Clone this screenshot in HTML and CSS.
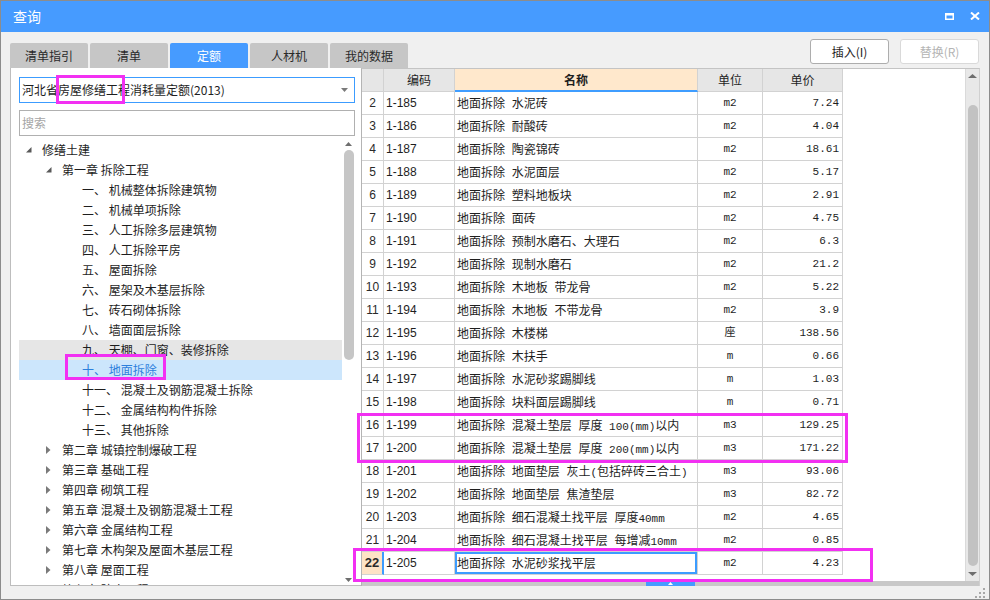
FILE: index.html
```html
<!DOCTYPE html>
<html lang="zh-CN">
<head>
<meta charset="utf-8">
<title>查询</title>
<link rel="stylesheet" href="styles.css">
</head>
<body>
<div class="window">
  <div class="titlebar">
    <span class="title">查询</span>
    <span class="tb-icons">
      <svg class="ico-max" width="9" height="7" viewBox="0 0 9 7"><rect x="0.75" y="0.75" width="7.5" height="5.5" fill="none" stroke="#fff" stroke-width="1.5"/><rect x="0" y="0" width="9" height="2.5" fill="#fff"/></svg>
      <svg class="ico-close" width="10" height="8" viewBox="0 0 10 8"><path d="M1 0.5L9 7.5M9 0.5L1 7.5" stroke="#fff" stroke-width="2"/></svg>
    </span>
  </div>

  <div class="toolbar">
    <div class="tabs">
      <div class="tab">清单指引</div>
      <div class="tab">清单</div>
      <div class="tab active">定额</div>
      <div class="tab">人材机</div>
      <div class="tab">我的数据</div>
    </div>
    <div class="buttons">
      <div class="btn">插入(I)</div>
      <div class="btn disabled">替换(R)</div>
    </div>
  </div>

  <div class="main">
    <div class="left">
      <div class="combo">
        <span class="combo-text">河北省房屋修缮工程消耗量定额(2013)</span>
        <svg class="combo-arrow" width="7" height="4" viewBox="0 0 7 4"><path d="M0 0H7L3.5 4Z" fill="#7a7a7a"/></svg>
      </div>
      <div class="search">搜索</div>
      <div class="tree-wrap">
        <div class="tree">
          <div class="node l0"><span class="tg"><svg width="6" height="6" viewBox="0 0 6 6"><path d="M5.5 0V5.5H0Z" fill="#595959"/></svg></span>修缮土建</div>
          <div class="node l1"><span class="tg"><svg width="6" height="6" viewBox="0 0 6 6"><path d="M5.5 0V5.5H0Z" fill="#595959"/></svg></span>第一章 拆除工程</div>
          <div class="node l2">一、 机械整体拆除建筑物</div>
          <div class="node l2">二、 机械单项拆除</div>
          <div class="node l2">三、 人工拆除多层建筑物</div>
          <div class="node l2">四、 人工拆除平房</div>
          <div class="node l2">五、 屋面拆除</div>
          <div class="node l2">六、 屋架及木基层拆除</div>
          <div class="node l2">七、 砖石砌体拆除</div>
          <div class="node l2">八、 墙面面层拆除</div>
          <div class="node l2 hover">九、 天棚、门窗、装修拆除</div>
          <div class="node l2 selected">十、 地面拆除</div>
          <div class="node l2">十一、 混凝土及钢筋混凝土拆除</div>
          <div class="node l2">十二、 金属结构构件拆除</div>
          <div class="node l2">十三、 其他拆除</div>
          <div class="node l1"><span class="tg"><svg width="5" height="8" viewBox="0 0 5 8"><path d="M0 0L4.5 4L0 8Z" fill="#7a7a7a"/></svg></span>第二章 城镇控制爆破工程</div>
          <div class="node l1"><span class="tg"><svg width="5" height="8" viewBox="0 0 5 8"><path d="M0 0L4.5 4L0 8Z" fill="#7a7a7a"/></svg></span>第三章 基础工程</div>
          <div class="node l1"><span class="tg"><svg width="5" height="8" viewBox="0 0 5 8"><path d="M0 0L4.5 4L0 8Z" fill="#7a7a7a"/></svg></span>第四章 砌筑工程</div>
          <div class="node l1"><span class="tg"><svg width="5" height="8" viewBox="0 0 5 8"><path d="M0 0L4.5 4L0 8Z" fill="#7a7a7a"/></svg></span>第五章 混凝土及钢筋混凝土工程</div>
          <div class="node l1"><span class="tg"><svg width="5" height="8" viewBox="0 0 5 8"><path d="M0 0L4.5 4L0 8Z" fill="#7a7a7a"/></svg></span>第六章 金属结构工程</div>
          <div class="node l1"><span class="tg"><svg width="5" height="8" viewBox="0 0 5 8"><path d="M0 0L4.5 4L0 8Z" fill="#7a7a7a"/></svg></span>第七章 木构架及屋面木基层工程</div>
          <div class="node l1"><span class="tg"><svg width="5" height="8" viewBox="0 0 5 8"><path d="M0 0L4.5 4L0 8Z" fill="#7a7a7a"/></svg></span>第八章 屋面工程</div>
          <div class="node l1"><span class="tg"><svg width="5" height="8" viewBox="0 0 5 8"><path d="M0 0L4.5 4L0 8Z" fill="#7a7a7a"/></svg></span>第九章 防水工程</div>
        </div>
        <div class="tscroll">
          <svg width="7" height="4" viewBox="0 0 7 4"><path d="M0 4H7L3.5 0Z" fill="#6e6e6e"/></svg>
          <div class="tthumb"></div>
          <div class="tspace"></div>
          <svg width="7" height="4" viewBox="0 0 7 4"><path d="M0 0H7L3.5 4Z" fill="#6e6e6e"/></svg>
        </div>
      </div>
    </div>

    <div class="grid-area">
      <div class="grid-main">
        <div class="grid">
          <div class="row head"><div class="c-no"></div><div class="c-code">编码</div><div class="c-name">名称</div><div class="c-unit">单位</div><div class="c-price">单价</div></div>
          <div class="row"><div class="c-no">2</div><div class="c-code">1-185</div><div class="c-name">地面拆除 水泥砖</div><div class="c-unit">m2</div><div class="c-price">7.24</div></div>
          <div class="row"><div class="c-no">3</div><div class="c-code">1-186</div><div class="c-name">地面拆除 耐酸砖</div><div class="c-unit">m2</div><div class="c-price">4.04</div></div>
          <div class="row"><div class="c-no">4</div><div class="c-code">1-187</div><div class="c-name">地面拆除 陶瓷锦砖</div><div class="c-unit">m2</div><div class="c-price">18.61</div></div>
          <div class="row"><div class="c-no">5</div><div class="c-code">1-188</div><div class="c-name">地面拆除 水泥面层</div><div class="c-unit">m2</div><div class="c-price">5.17</div></div>
          <div class="row"><div class="c-no">6</div><div class="c-code">1-189</div><div class="c-name">地面拆除 塑料地板块</div><div class="c-unit">m2</div><div class="c-price">2.91</div></div>
          <div class="row"><div class="c-no">7</div><div class="c-code">1-190</div><div class="c-name">地面拆除 面砖</div><div class="c-unit">m2</div><div class="c-price">4.75</div></div>
          <div class="row"><div class="c-no">8</div><div class="c-code">1-191</div><div class="c-name">地面拆除 预制水磨石、大理石</div><div class="c-unit">m2</div><div class="c-price">6.3</div></div>
          <div class="row"><div class="c-no">9</div><div class="c-code">1-192</div><div class="c-name">地面拆除 现制水磨石</div><div class="c-unit">m2</div><div class="c-price">21.2</div></div>
          <div class="row"><div class="c-no">10</div><div class="c-code">1-193</div><div class="c-name">地面拆除 木地板 带龙骨</div><div class="c-unit">m2</div><div class="c-price">5.22</div></div>
          <div class="row"><div class="c-no">11</div><div class="c-code">1-194</div><div class="c-name">地面拆除 木地板 不带龙骨</div><div class="c-unit">m2</div><div class="c-price">3.9</div></div>
          <div class="row"><div class="c-no">12</div><div class="c-code">1-195</div><div class="c-name">地面拆除 木楼梯</div><div class="c-unit">座</div><div class="c-price">138.56</div></div>
          <div class="row"><div class="c-no">13</div><div class="c-code">1-196</div><div class="c-name">地面拆除 木扶手</div><div class="c-unit">m</div><div class="c-price">0.66</div></div>
          <div class="row"><div class="c-no">14</div><div class="c-code">1-197</div><div class="c-name">地面拆除 水泥砂浆踢脚线</div><div class="c-unit">m</div><div class="c-price">1.03</div></div>
          <div class="row"><div class="c-no">15</div><div class="c-code">1-198</div><div class="c-name">地面拆除 块料面层踢脚线</div><div class="c-unit">m</div><div class="c-price">0.71</div></div>
          <div class="row"><div class="c-no">16</div><div class="c-code">1-199</div><div class="c-name">地面拆除 混凝土垫层 厚度 <span class="mono">100(mm)</span>以内</div><div class="c-unit">m3</div><div class="c-price">129.25</div></div>
          <div class="row"><div class="c-no">17</div><div class="c-code">1-200</div><div class="c-name">地面拆除 混凝土垫层 厚度 <span class="mono">200(mm)</span>以内</div><div class="c-unit">m3</div><div class="c-price">171.22</div></div>
          <div class="row"><div class="c-no">18</div><div class="c-code">1-201</div><div class="c-name">地面拆除 地面垫层 灰土<span class="mono">(</span>包括碎砖三合土<span class="mono">)</span></div><div class="c-unit">m3</div><div class="c-price">93.06</div></div>
          <div class="row"><div class="c-no">19</div><div class="c-code">1-202</div><div class="c-name">地面拆除 地面垫层 焦渣垫层</div><div class="c-unit">m3</div><div class="c-price">82.72</div></div>
          <div class="row"><div class="c-no">20</div><div class="c-code">1-203</div><div class="c-name">地面拆除 细石混凝土找平层 厚度<span class="mono">40mm</span></div><div class="c-unit">m2</div><div class="c-price">4.65</div></div>
          <div class="row"><div class="c-no">21</div><div class="c-code">1-204</div><div class="c-name">地面拆除 细石混凝土找平层 每增减<span class="mono">10mm</span></div><div class="c-unit">m2</div><div class="c-price">0.85</div></div>
          <div class="row sel"><div class="c-no">22</div><div class="c-code">1-205</div><div class="c-name">地面拆除 水泥砂浆找平层</div><div class="c-unit">m2</div><div class="c-price">4.23</div></div>
        </div>
        <div class="vscroll">
          <svg width="9" height="4" viewBox="0 0 9 4"><path d="M0 4H9L4.5 0Z" fill="#6e6e6e"/></svg>
          <div class="vthumb"></div>
          <svg class="vdown" width="9" height="4" viewBox="0 0 9 4"><path d="M0 0H9L4.5 4Z" fill="#6e6e6e"/></svg>
        </div>
      </div>
      <div class="hsplit">
        <div class="collapse"><svg width="5" height="3" viewBox="0 0 5 3"><path d="M0 3H5L2.5 0Z" fill="#fff"/></svg></div>
      </div>
    </div>
  </div>

  <div class="footer">
    <svg width="11" height="10" viewBox="0 0 11 10"><g fill="#a8a8a8"><rect x="8" y="0" width="2" height="2"/><rect x="4" y="4" width="2" height="2"/><rect x="8" y="4" width="2" height="2"/><rect x="0" y="8" width="2" height="2"/><rect x="4" y="8" width="2" height="2"/><rect x="8" y="8" width="2" height="2"/></g></svg>
  </div>

  <div class="ann a1"></div>
  <div class="ann a2"></div>
  <div class="ann a3"></div>
  <div class="ann a4"></div>
</div>
</body>
</html>
```

FILE: styles.css
```css
* { box-sizing: border-box; }
html, body { margin: 0; padding: 0; }
body {
  width: 990px;
  height: 600px;
  overflow: hidden;
  font-family: "Noto Sans CJK SC", "Microsoft YaHei", sans-serif;
  font-size: 12px;
  color: #1e1e1e;
  background: #f0f0f0;
}
.window {
  position: relative;
  width: 990px;
  height: 600px;
  border: 1px solid #8c8c8c;
  background: #f0f0f0;
  display: flex;
  flex-direction: column;
}

/* title bar */
.titlebar {
  height: 31px;
  flex: none;
  background: #469bff;
  color: #fff;
  display: flex;
  align-items: center;
  padding: 0 9px 0 12px;
}
.title { font-size: 14px; line-height: 16px; margin-top: -1px; }
.tb-icons { margin-left: auto; display: flex; align-items: center; gap: 16px; margin-top: -1px; }
.tb-icons svg { display: block; }

/* toolbar: tabs + buttons */
.toolbar {
  height: 36px;
  flex: none;
  display: flex;
  align-items: flex-end;
  padding: 0 10px 0 9px;
}
.tabs { display: flex; gap: 2px; }
.tab {
  width: 78px;
  height: 25px;
  background: #c6c6c6;
  border-radius: 2px 2px 0 0;
  text-align: center;
  line-height: 25px;
  color: #2a2a2a;
  font-size: 12px;
}
.tab.active { background: #469bff; color: #fff; }
.buttons { margin-left: auto; align-self: flex-start; margin-top: 7px; display: flex; gap: 11px; }
.btn {
  width: 79px;
  height: 25px;
  background: #fff;
  border: 1px solid #adadad;
  border-radius: 3px;
  text-align: center;
  line-height: 23px;
  color: #1e1e1e;
}
.btn.disabled { border-color: #d9d9d9; color: #b4b4b4; }

/* main */
.main {
  height: 518px;
  flex: none;
  display: flex;
  padding: 0 9px;
}
.left {
  width: 351px;
  flex: none;
  background: #fff;
  border-left: 1px solid #bdbdbd;
  border-bottom: 1px solid #bdbdbd;
  padding: 9px 6px 0 8px;
  display: flex;
  flex-direction: column;
  overflow: hidden;
}
.combo {
  height: 26px;
  flex: none;
  border: 1px solid #3c9cff;
  display: flex;
  align-items: center;
  padding: 0 6px 0 2px;
  font-size: 12px;
}
.combo-text { line-height: 18px; }
.combo-arrow { margin-left: auto; display: block; }
.search {
  height: 26px;
  flex: none;
  margin-top: 7px;
  border: 1px solid #b0b0b0;
  padding-left: 2px;
  line-height: 24px;
  color: #a5a5a5;
}
.tree-wrap {
  flex: 1;
  display: flex;
  min-height: 0;
  margin-top: 1px;
}
.tree {
  flex: 1;
  padding-top: 3px;
  overflow: hidden;
}
.node {
  height: 20px;
  line-height: 20px;
  white-space: nowrap;
  display: flex;
  align-items: center;
}
.node.l0 { padding-left: 7px; }
.node.l1 { padding-left: 27px; }
.node.l2 { padding-left: 63px; }
.tg { width: 16px; flex: none; display: flex; align-items: center; }
.tg svg { display: block; }
.node.hover { background: #e6e6e6; }
.node.selected { background: #cce6fc; color: #2c80dc; }

.tscroll {
  width: 13px;
  flex: none;
  display: flex;
  flex-direction: column;
  align-items: center;
  padding: 5px 0 3px;
}
.tscroll svg { display: block; flex: none; }
.tthumb {
  width: 10px;
  height: 210px;
  flex: none;
  margin-top: 4px;
  background: #c6c6c6;
  border-radius: 5px;
}
.tspace { flex: 1; }

/* grid */
.grid-area {
  width: 619px;
  flex: none;
  background: #fff;
  border-top: 1px solid #c4c4c4;
  border-left: 1px solid #b4b4b4;
  border-right: 1px solid #d0d0d0;
  display: flex;
  flex-direction: column;
}
.grid-main { height: 512px; display: flex; }
.grid { flex: 1; overflow: hidden; }
.row {
  display: grid;
  grid-template-columns: 22px 71px 243px 65px 80px;
  height: 23px;
}
.row > div {
  border-right: 1px solid #d2d2d2;
  border-bottom: 1px solid #d2d2d2;
  line-height: 22px;
  white-space: nowrap;
  overflow: hidden;
}
.c-no { text-align: center; font-family: "Liberation Sans", Arial, sans-serif; font-size: 12px; color: #2a2a2a; }
.c-code { padding-left: 2px; font-family: "Liberation Sans", Arial, sans-serif; font-size: 12px; }
.c-name { padding-left: 2px; word-spacing: 4px; }
.c-unit { text-align: center; font-family: "Liberation Mono", "Noto Sans CJK SC", monospace; font-size: 11px; }
.c-price { text-align: right; padding-right: 3px; font-family: "Liberation Mono", monospace; font-size: 11px; }
.mono { font-family: "Liberation Mono", monospace; font-size: 11px; word-spacing: 0; }

.row.head > div {
  background: #e6e6e6;
  text-align: center;
  font-family: "Noto Sans CJK SC", sans-serif;
  font-size: 12px;
  padding: 0;
}
.row.head > .c-name {
  background: #ffe8cc;
  font-weight: bold;
  border-bottom: 2px solid #3f9dff;
  line-height: 21px;
}
.row.sel .c-no {
  background: #fde3c6;
  font-weight: bold;
  font-size: 13px;
  border-right: 2px solid #3c9cff;
}
.row.sel .c-name { box-shadow: inset 0 0 0 2px #3c9cff; }

.vscroll {
  width: 14px;
  flex: none;
  background: #e8e8e8;
  border-left: 1px solid #dadada;
  display: flex;
  flex-direction: column;
  align-items: center;
  padding: 5px 0 5px;
}
.vscroll svg { display: block; flex: none; }
.vthumb {
  width: 10px;
  flex: 1;
  margin-top: 27px;
  background: #c2c2c2;
  border-radius: 5px;
}
.vdown { margin-top: 6px; }

.hsplit {
  height: 5px;
  flex: none;
  background: #c8c8c8;
  display: flex;
}
.collapse {
  width: 49px;
  height: 5px;
  margin-left: 284px;
  background: #469bff;
  display: flex;
  justify-content: center;
  align-items: center;
}
.collapse svg { display: block; }

.footer {
  flex: 1;
  display: flex;
  justify-content: flex-end;
  align-items: flex-end;
  padding: 0 3px 1px 0;
}
.footer svg { display: block; }

/* annotation boxes drawn over the screenshot */
.ann {
  position: absolute;
  border: 3px solid #f230f2;
  pointer-events: none;
}
.a1 { left: 55px; top: 74px; width: 69px; height: 29px; }
.a2 { left: 64px; top: 353px; width: 101px; height: 26px; }
.a3 { left: 356px; top: 412px; width: 491px; height: 50px; }
.a4 { left: 352px; top: 547px; width: 520px; height: 34px; }
```
